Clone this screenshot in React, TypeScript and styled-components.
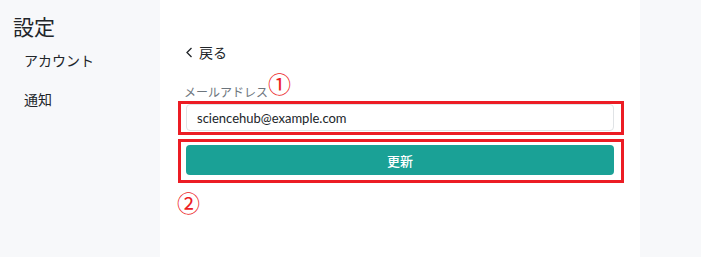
import React from 'react'
import styled, { createGlobalStyle } from 'styled-components'

const GlobalStyle = createGlobalStyle`
  html, body {
    margin: 0;
    padding: 0;
    background: #f7f8fa;
    font-family: "Lato", "Noto Sans CJK JP", sans-serif;
    color: #212529;
  }
`

const Page = styled.div`
  display: flex;
  height: 257px;
  width: 701px;
  background: #f7f8fa;
`

const Sidebar = styled.nav`
  width: 160px;
  padding: 13px 0 0 13px;
  box-sizing: border-box;
`

const SideTitle = styled.div`
  font-size: 21px;
  line-height: 28px;
  margin-bottom: 10px;
`

const SideItem = styled.div`
  font-size: 14px;
  line-height: 20px;
  padding-left: 11px;
  margin-bottom: 19px;
`

const Main = styled.main`
  width: 480px;
  background: #ffffff;
  padding: 43px 26px 0 26px;
  box-sizing: border-box;
`

const BackLink = styled.a`
  display: block;
  font-size: 14px;
  line-height: 20px;
  color: #212529;
  margin-left: -1px;
  cursor: pointer;
`

const Label = styled.div`
  font-size: 12px;
  line-height: 18px;
  color: #6c757d;
  margin-top: 21px;
  margin-left: -2px;
  margin-bottom: 2px;
`

const Annotated = styled.div<{ top: number; bottom: number }>`
  position: relative;
  &::after {
    content: '';
    position: absolute;
    left: -8px;
    right: -10px;
    top: ${({ top }) => -top}px;
    bottom: ${({ bottom }) => -bottom}px;
    border: 3px solid #ec1c24;
    pointer-events: none;
  }
`

const Marker = styled.span<{ x: number; y: number }>`
  position: absolute;
  left: ${({ x }) => x}px;
  top: ${({ y }) => y}px;
  font-family: "Noto Sans CJK JP", sans-serif;
  font-size: 23px;
  line-height: 24px;
  color: #ec1c24;
`

const Input = styled.input`
  display: block;
  width: 100%;
  height: 27px;
  box-sizing: border-box;
  border: 1px solid #e0e3e6;
  border-radius: 4px;
  padding: 0 0 0 10px;
  font-family: inherit;
  font-size: 13px;
  color: #212529;
  outline: none;
`

const Button = styled.button`
  display: block;
  width: 100%;
  height: 30px;
  border: none;
  border-radius: 4px;
  background: #1aa196;
  color: #ffffff;
  font-family: inherit;
  font-size: 13px;
  font-weight: 500;
  cursor: pointer;
`

const Spacer = styled.div`
  height: 14px;
`

const App = () => (
  <>
    <GlobalStyle />
    <Page>
      <Sidebar>
        <SideTitle>設定</SideTitle>
        <SideItem>アカウント</SideItem>
        <SideItem>通知</SideItem>
      </Sidebar>
      <Main>
        <BackLink>
          <svg width="9" height="11" viewBox="0 0 9 11" style={{ marginRight: 5 }}>
            <path d="M6.5 1 L2 5.5 L6.5 10" fill="none" stroke="#212529" strokeWidth="1.3" />
          </svg>
          戻る
        </BackLink>
        <Label>メールアドレス</Label>
        <Annotated top={3} bottom={4}>
          <Marker x={82} y={-33}>①</Marker>
          <Input defaultValue="sciencehub@example.com" />
        </Annotated>
        <Spacer />
        <Annotated top={6} bottom={8}>
          <Button>更新</Button>
          <Marker x={-9} y={45}>②</Marker>
        </Annotated>
      </Main>
    </Page>
  </>
)

export default App
